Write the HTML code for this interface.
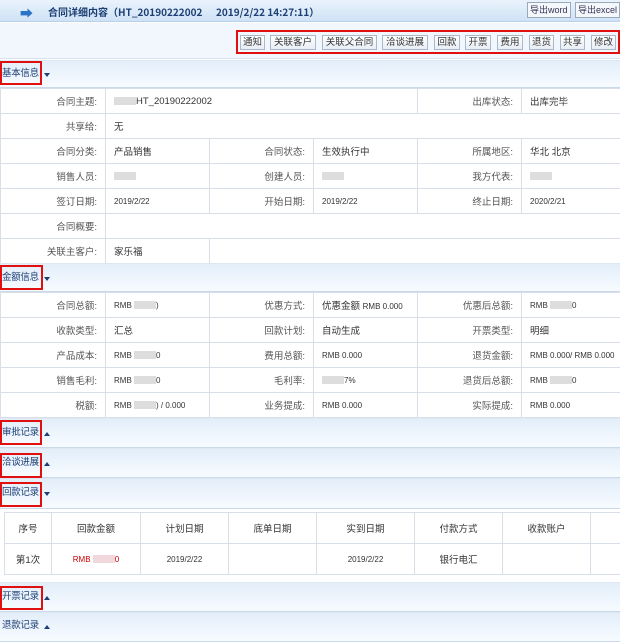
<!DOCTYPE html>
<html><head><meta charset="utf-8"><style>
*{margin:0;padding:0;box-sizing:border-box}
body{width:620px;height:630px;overflow:hidden;background:#fff;font-family:"Liberation Sans","Noto Sans CJK SC",sans-serif;font-size:10px;color:#333;position:relative}
.abs{position:absolute}
.title{left:0;top:0;width:620px;height:22px;background:linear-gradient(#eaf3fc,#cfe2f5);border-bottom:1px solid #b8d0e8}
.title .t{position:absolute;left:48px;top:4px;font-weight:bold;color:#1d3f73;font-size:10px;font-family:"Noto Sans CJK SC",sans-serif}
.exp{position:absolute;top:2px;height:16px;border:1px solid #9ab;background:#f5f8fb;font-size:9px;line-height:14px;padding:0 2px;color:#335}
.tool{left:0;top:23px;width:620px;height:36px;background:#f1f7fd;border-bottom:1px solid #d5e3f0}
.rb{position:absolute;border:2px solid #e01010}
.btn{position:absolute;top:35px;height:15px;border:1px solid #aab8c8;background:linear-gradient(#fff,#e8eef5);font-size:9.5px;line-height:13px;text-align:center;color:#333}
.sec{position:absolute;left:0;width:620px;background:linear-gradient(#e3eefa,#f7fbff);border-bottom:1px solid #c9d9ea;border-top:1px solid #dde8f3}
.sec span{position:absolute;left:2px;font-size:9.5px;line-height:12px;color:#1d3f73;letter-spacing:-0.3px}
.sec i{position:absolute;left:44px;width:0;height:0;border-left:3px solid transparent;border-right:3px solid transparent}
.dn{border-top:4px solid #1d3f73}
.up{border-bottom:4px solid #1d3f73}
table{border-collapse:collapse;position:absolute;left:0;width:620px;table-layout:fixed}
td{border:1px solid #d8dfe8;height:25px;font-size:9.5px;padding:0 8px;white-space:nowrap;overflow:hidden}
td.l{text-align:right;color:#555;padding-right:8px}
.b{display:inline-block;width:22px;height:8px;background:#ddd;vertical-align:middle}
.m{font-size:8px}
</style></head><body>
<div class="abs title"><span style="position:absolute;left:20px;top:3px;color:#2a73c8;font-size:13px">➡</span><span class="t">合同详细内容（HT_20190222002 &nbsp;&nbsp;&nbsp;&nbsp; 2019/2/22 14:27:11）</span>
<span class="exp" style="left:527px">导出word</span><span class="exp" style="left:575px">导出excel</span></div>
<div class="abs tool"></div>
<div class="rb" style="left:236px;top:30px;width:384px;height:24px"></div>
<div class="btn" style="left:240px;width:25px">通知</div>
<div class="btn" style="left:270px;width:46px">关联客户</div>
<div class="btn" style="left:322px;width:55px">关联父合同</div>
<div class="btn" style="left:382px;width:46px">洽谈进展</div>
<div class="btn" style="left:434px;width:26px">回款</div>
<div class="btn" style="left:465px;width:26px">开票</div>
<div class="btn" style="left:497px;width:26px">费用</div>
<div class="btn" style="left:529px;width:25px">退货</div>
<div class="btn" style="left:560px;width:25px">共享</div>
<div class="btn" style="left:591px;width:25px">修改</div>

<div class="sec" style="top:60px;height:28px"><span style="top:7px">基本信息</span><i class="dn" style="top:12px"></i></div>
<div class="rb" style="left:0;top:61px;width:42px;height:24px"></div>
<table style="top:88px">
<colgroup><col width="105"><col width="104"><col width="104"><col width="104"><col width="104"><col width="99"></colgroup>
<tr><td class="l">合同主题:</td><td colspan="3"><span class="b"></span>HT_20190222002</td><td class="l">出库状态:</td><td>出库完毕</td></tr>
<tr><td class="l">共享给:</td><td colspan="5">无</td></tr>
<tr><td class="l">合同分类:</td><td>产品销售</td><td class="l">合同状态:</td><td>生效执行中</td><td class="l">所属地区:</td><td>华北 北京</td></tr>
<tr><td class="l">销售人员:</td><td><span class="b"></span></td><td class="l">创建人员:</td><td><span class="b"></span></td><td class="l">我方代表:</td><td><span class="b"></span></td></tr>
<tr><td class="l">签订日期:</td><td class="m">2019/2/22</td><td class="l">开始日期:</td><td class="m">2019/2/22</td><td class="l">终止日期:</td><td class="m">2020/2/21</td></tr>
<tr><td class="l">合同概要:</td><td colspan="5"></td></tr>
<tr><td class="l">关联主客户:</td><td>家乐福</td><td colspan="4"></td></tr>
</table>

<div class="sec" style="top:263px;height:29px"><span style="top:8px">金额信息</span><i class="dn" style="top:13px"></i></div>
<div class="rb" style="left:0;top:265px;width:43px;height:25px"></div>
<table style="top:292px">
<colgroup><col width="105"><col width="104"><col width="104"><col width="104"><col width="104"><col width="99"></colgroup>
<tr><td class="l">合同总额:</td><td class="m">RMB <span class="b"></span>)</td><td class="l">优惠方式:</td><td>优惠金额 <span class="m">RMB 0.000</span></td><td class="l">优惠后总额:</td><td class="m">RMB <span class="b"></span>0</td></tr>
<tr><td class="l">收款类型:</td><td>汇总</td><td class="l">回款计划:</td><td>自动生成</td><td class="l">开票类型:</td><td>明细</td></tr>
<tr><td class="l">产品成本:</td><td class="m">RMB <span class="b"></span>0</td><td class="l">费用总额:</td><td class="m">RMB 0.000</td><td class="l">退货金额:</td><td class="m">RMB 0.000/ RMB 0.000</td></tr>
<tr><td class="l">销售毛利:</td><td class="m">RMB <span class="b"></span>0</td><td class="l">毛利率:</td><td class="m"><span class="b"></span>7%</td><td class="l">退货后总额:</td><td class="m">RMB <span class="b"></span>0</td></tr>
<tr><td class="l">税额:</td><td class="m">RMB <span class="b"></span>) / 0.000</td><td class="l">业务提成:</td><td class="m">RMB 0.000</td><td class="l">实际提成:</td><td class="m">RMB 0.000</td></tr>
</table>

<div class="sec" style="top:418px;height:30px"><span style="top:8px">审批记录</span><i class="up" style="top:13px"></i></div>
<div class="rb" style="left:0;top:420px;width:42px;height:25px"></div>
<div class="sec" style="top:448px;height:30px"><span style="top:8px">洽谈进展</span><i class="up" style="top:13px"></i></div>
<div class="rb" style="left:0;top:453px;width:42px;height:25px"></div>
<div class="sec" style="top:478px;height:31px"><span style="top:8px">回款记录</span><i class="dn" style="top:13px"></i></div>
<div class="rb" style="left:0;top:482px;width:42px;height:25px"></div>
<table style="top:512px;left:4px;width:620px">
<colgroup><col width="47"><col width="89"><col width="88"><col width="88"><col width="98"><col width="88"><col width="88"><col width="34"></colgroup>
<tr><td style="height:31px;text-align:center">序号</td><td style="text-align:center">回款金额</td><td style="text-align:center">计划日期</td><td style="text-align:center">底单日期</td><td style="text-align:center">实到日期</td><td style="text-align:center">付款方式</td><td style="text-align:center">收款账户</td><td></td></tr>
<tr><td style="height:31px;text-align:center">第1次</td><td style="text-align:center;color:#c00" class="m">RMB <span class="b" style="background:#f0d8dc"></span>0</td><td class="m" style="text-align:center">2019/2/22</td><td></td><td class="m" style="text-align:center">2019/2/22</td><td style="text-align:center">银行电汇</td><td></td><td></td></tr>
</table>
<div class="sec" style="top:582px;height:30px"><span style="top:8px">开票记录</span><i class="up" style="top:13px"></i></div>
<div class="rb" style="left:0;top:586px;width:43px;height:24px"></div>
<div class="sec" style="top:612px;height:30px"><span style="top:7px">退款记录</span><i class="up" style="top:12px"></i></div>
</body></html>
